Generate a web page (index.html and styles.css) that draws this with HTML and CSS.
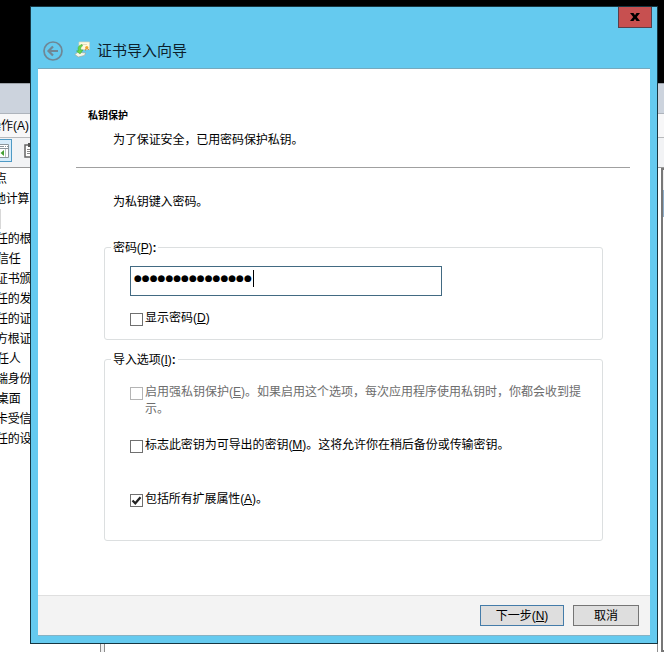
FILE: index.html
```html
<!DOCTYPE html>
<html lang="zh-CN">
<head>
<meta charset="utf-8">
<title>证书导入向导</title>
<link rel="stylesheet" href="styles.css">
</head>
<body>
<div class="console">
  <div class="console-title"></div>
  <div class="console-menu"><span>操作(A)</span></div>
  <div class="console-tools">
    <span class="tool-active"><svg width="9" height="14" viewBox="0 0 9 14"><path d="M-1 .5h9.500v13H-1M0 4.500h8" fill="#fff" stroke="#8c969c"/><path d="M0 2.500h4M5 2.500h1M7 2.500h1" stroke="#8c969c"/><path d="M5.500 5v8" stroke="#bac1c5"/><path d="M4 6v6L.5 9z" fill="#45a035"/></svg></span>
    <svg class="clip" width="12" height="17" viewBox="0 0 12 17"><path d="M1 3h10v12H1z" fill="#fff" stroke="#666" stroke-width="1.500"/><path d="M4 1h5v4H4z" fill="#555"/><path d="M3 7.500h7M3 9.500h7M3 11.500h7" stroke="#888"/></svg>
  </div>
  <div class="console-body">
    <div class="tree">
      <div class="root">点</div><div class="local">地计算</div><div><i class="selected"></i></div><div>任的根</div><div class="wide">信任</div><div>证书颁</div><div>任的发</div><div>任的证</div><div>方根证</div><div class="wide">任人</div><div>端身份</div><div class="wide">桌面</div><div>卡受信</div><div>任的设</div>
    </div>
    <div class="splitter"></div>
    <div class="list"></div>
    <div class="actions"><div class="action-head"></div><div class="action-selected"></div></div>
  </div>
</div>

<div class="wizard">
  <header>
    <button class="close" aria-label="关闭"><svg width="10" height="8" viewBox="0 0 10 8"><path d="M0 0h3.500L5 2.300 6.500 0H10L6.800 4 10 8H6.500L5 5.700 3.500 8H0l3.200-4z"/></svg></button>
    <div class="caption">
      <svg width="20" height="20" viewBox="0 0 20 20" fill="none" stroke="#6f8795"><circle cx="10" cy="10" r="9" stroke-width="1.700"/><path d="M15 10H6M10 5.500L5.500 10l4.500 4.500" stroke-width="2.200"/></svg>
      <svg class="cert" width="17" height="17" viewBox="0 0 17 17"><path d="M5 1h10.500v7.500H5z" fill="#fff9df" stroke="#d7d5bd" stroke-width=".7"/><path d="M7 3.500h6" stroke="#e2dcc0"/><circle cx="12.800" cy="6.500" r="1.600" fill="#f0a52e"/><path d="M12 7.500l-.5 2M13.700 7.500l1 1.500" stroke="#d58428"/><path d="M.8 13.500l3-2.300 8 .8-1.500 2.500-6 1.500z" fill="#f4f6ea" stroke="#9aaa9e" stroke-width=".7"/><path d="M8 3.500C4.500 4.500 3.500 6.500 4.500 9.500l-2 .5 3.500 3 3-4-2 .2C6.300 7.500 6.500 6 8.500 5z" fill="#66d74c" stroke="#38a534" stroke-width=".5"/></svg>
      <h1>证书导入向导</h1>
    </div>
  </header>
  <main>
    <h2>私钥保护</h2>
    <p class="intro">为了保证安全，已用密码保护私钥。</p>
    <hr>
    <p class="prompt">为私钥键入密码。</p>
    <section class="group password">
      <div class="legend">密码(<u>P</u>)<b>:</b></div>
      <div class="field"><span>●●●●●●●●●●●●●●●</span><i class="caret"></i></div>
      <div class="check"><i class="box"></i><span>显示密码(<u>D</u>)</span></div>
    </section>
    <section class="group options">
      <div class="legend">导入选项(<u>I</u>)<b>:</b></div>
      <div class="check disabled"><i class="box"></i><span>启用强私钥保护(<u>E</u>)。如果启用这个选项，每次应用程序使用私钥时，你都会收到提<br>示。</span></div>
      <div class="check export"><i class="box"></i><span>标志此密钥为可导出的密钥(<u>M</u>)。这将允许你在稍后备份或传输密钥。</span></div>
      <div class="check extended"><i class="box"><svg width="11" height="11" viewBox="0 0 11 11"><path d="M1.500 5.500L4.300 8.300 9.500 2.200" fill="none" stroke="#222" stroke-width="2.200"/></svg></i><span>包括所有扩展属性(<u>A</u>)。</span></div>
    </section>
  </main>
  <footer><button class="next">下一步(<u>N</u>)</button><button class="cancel">取消</button></footer>
</div>
</body>
</html>
```
FILE: styles.css
```css
* { box-sizing: border-box; }
body {
  margin: 0; width: 664px; height: 652px; overflow: hidden; background: #000;
  font: 12px/16px "Liberation Sans", "Noto Sans CJK SC", sans-serif; color: #000;
}
h1, h2, p { margin: 0; font-weight: normal; }
u { text-underline-offset: 1px; text-decoration-thickness: 1px; }
svg { display: block; flex: none; }
button { font: inherit; color: #000; padding: 0; }

.console { display: flex; flex-direction: column; height: 652px; padding-top: 83px; overflow: hidden; }
.console-title { height: 31px; flex: none; background: #ccd3dd; border-top: 1px solid #9ba1a8; border-bottom: 1px solid #aeb4bc; }
.console-menu { height: 24px; flex: none; background: #f7f7f8; border-bottom: 1px solid #b8babc; white-space: nowrap; }
.console-menu span { display: block; margin-left: -11px; line-height: 25px; }
.console-tools { height: 29px; flex: none; display: flex; gap: 12px; background: #f2f3f5; }
.tool-active { width: 12px; height: 23px; margin-top: 1px; display: flex; align-items: center; background: #d7ecfa; border: 1px solid #4f9ac5; border-left: 0; }
.clip { margin-top: 4px; }
.console-body { flex: 1; min-height: 0; display: flex; background: #fff; border-top: 1px solid #999; }
.tree { width: 100px; flex: none; overflow: hidden; white-space: nowrap; padding-top: 1px; }
.tree div { height: 20px; line-height: 20px; margin-left: -4px; letter-spacing: -.2px; }
.tree .root { margin-left: -5px; }
.tree .local { margin-left: -6px; }
.tree .wide { margin-left: -3px; }
.selected { display: block; width: 5px; height: 20px; background: #d8d8d8; }
.splitter { width: 5px; border: 1px solid #8c8c8c; border-width: 0 1px; background: #f1f1f1; }
.list { width: 553px; border-right: 1px solid #8e8e8e; }
.actions { flex: 1; margin-left: 3px; border: 2px solid #777; border-right: 0; }
.action-head { height: 20px; background: #eee; }
.action-selected { height: 27px; background: #8eaecb; }

.wizard { position: absolute; left: 30px; top: 6px; width: 628px; height: 638px; border: 1px solid #163641; background: #65caef; display: flex; flex-direction: column; padding: 0 7px 7px; }
header { height: 61px; flex: none; display: flex; flex-direction: column; }
.close { align-self: flex-end; margin-right: -2px; width: 34px; height: 21px; flex: none; display: flex; align-items: center; justify-content: center; border: 1px solid #593f4a; border-top: 0; background: #c75050; }
.caption { display: flex; align-items: center; margin: 12px 0 0 5px; height: 21px; }
.cert { margin: -2px 0 0 11px; }
h1 { font-size: 15px; line-height: 20px; margin-left: 6px; color: #0d202c; }
main { flex: 1; min-height: 0; border-top: 1px solid #76a9bd; background: #fff; padding: 39px 20px 0 38px; }
h2 { font-weight: bold; font-size: 10px; margin-left: 12px; line-height: 16px; }
.intro { margin: 7px 0 0 37px; line-height: 18px; letter-spacing: -.1px; }
hr { height: 1px; margin: 18px 0 25px; border: 0; background: #a0a0a0; }
.prompt { margin-left: 37px; line-height: 18px; letter-spacing: -.1px; }
.group { width: 499px; margin-left: 28px; border: 1px solid #dcdfe0; border-radius: 3px; padding-left: 25px; }
.password { height: 93px; margin-top: 36px; }
.options { height: 182px; margin-top: 19px; }
.legend { width: max-content; margin: -8px 0 0 -19px; padding: 0 2px; background: #fff; height: 16px; line-height: 17px; letter-spacing: -.1px; }
.field { display: flex; width: 312px; height: 30px; margin-top: 10px; padding: 2px 0 0 3px; border: 1px solid #426a82; }
.field span { font: 9px/18px "DejaVu Sans", sans-serif; width: 119px; white-space: nowrap; }
.caret { width: 1px; height: 17px; margin-top: 1px; background: #000; }
.check { display: flex; align-items: flex-start; gap: 2px; margin-top: 14px; }
.check span { white-space: nowrap; }
.box { width: 13px; height: 13px; margin-top: 3px; flex: none; border: 1px solid #707070; background: #fff; }
.options .check { margin-top: 16px; }
.disabled { color: #6d6d6d; height: 34px; }
.disabled span { line-height: 17px; }
.disabled .box { border-color: #b4b4b4; }
.options .export { margin-top: 19px; }
.export span { letter-spacing: -.05px; }
.options .extended { margin-top: 38px; }
.extended span { letter-spacing: -.1px; }
footer { height: 41px; flex: none; display: flex; justify-content: flex-end; gap: 9px; padding: 9px 11px 0 0; border-top: 1px solid #dfdfdf; border-bottom: 1px solid #86b2c4; background: #f3f3f3; }
footer button { height: 21px; background: #dedede; }
.next { width: 84px; border: 1px solid #447ca9; }
.cancel { width: 66px; border: 1px solid #757575; }
```
